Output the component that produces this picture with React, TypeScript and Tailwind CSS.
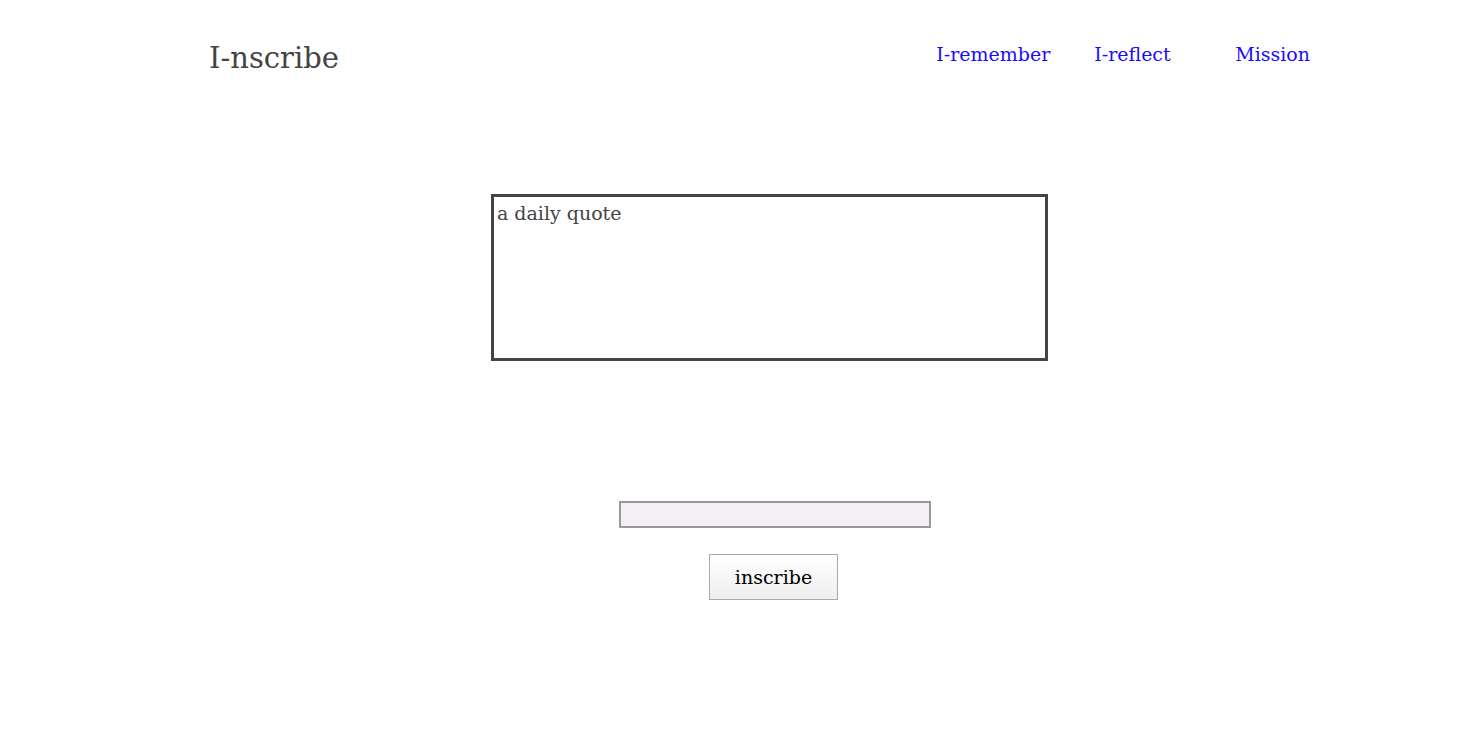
import React from "react";

export default function App() {
  return (
    <div className="min-h-screen bg-white" style={{ fontFamily: '"DejaVu Serif", Georgia, serif' }}>
      <header className="flex items-start pt-[38px]">
        <div className="ml-[209px] text-[29px] leading-[40px] text-[#444]">I-nscribe</div>
        <nav className="ml-auto mr-[172px] flex pt-[2px] text-[19px] leading-[28px] text-[#1a0dff]">
          <a className="w-[157px] pl-[1px]">I-remember</a>
          <a className="w-[143px] pl-[2px]">I-reflect</a>
          <a>Mission</a>
        </nav>
      </header>
      <main className="flex flex-col items-center">
        <div className="mt-[116px] ml-[57px] h-[167px] w-[557px] border-[3px] border-[#444] px-[3px] py-[3px] text-[19px] leading-[26px] text-[#444]">
          a daily quote
        </div>
        <input className="mt-[140px] ml-[68px] h-[27px] w-[312px] border-2 border-[#999] bg-[#f3eff5] outline-none" />
        <button className="mt-[26px] ml-[65px] h-[46px] w-[129px] border border-[#aaa] bg-gradient-to-b from-white to-[#eee] text-[19px] text-black">
          inscribe
        </button>
      </main>
    </div>
  );
}
